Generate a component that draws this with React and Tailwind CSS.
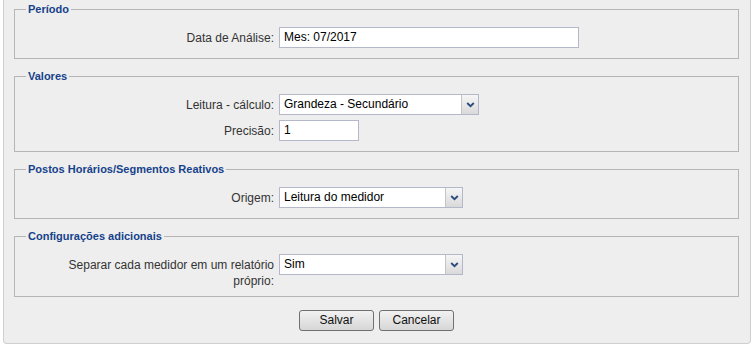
import React from "react";

const font = { fontFamily: '"Liberation Sans", Arial, sans-serif' };

function Chevron() {
  return (
    <svg width="9" height="6" viewBox="0 0 9 6">
      <path d="M1.2 1 L4.5 4.2 L7.8 1" fill="none" stroke="#2b4a7c" strokeWidth="1.8" />
    </svg>
  );
}

function Select({ value, width }) {
  return (
    <div className={`flex h-[21px] border border-[#b5b8c8] bg-white ${width}`}>
      <span className="flex-1 pl-[4px] text-[12px] leading-[19px] text-black">{value}</span>
      <div className="flex w-[17px] items-center justify-center border-l border-[#c4c4c4] bg-gradient-to-b from-[#f6f6f6] to-[#d9d9d9]">
        <Chevron />
      </div>
    </div>
  );
}

function Input({ value, width }) {
  return (
    <div className={`h-[21px] border border-[#b5b8c8] bg-white pl-[4px] text-[12px] leading-[19px] text-black ${width}`}>
      {value}
    </div>
  );
}

function Row({ label, children }) {
  return (
    <div className="flex items-start">
      <div className="w-[254px] pl-[40px] pr-[5px] pt-[3px] text-right text-[12px] leading-[16px] text-[#333]">
        {label}
      </div>
      {children}
    </div>
  );
}

function Fieldset({ legend, children, last }) {
  return (
    <fieldset
      className={`border border-[#b5b5b5] px-[10px] pt-[11px] ${last ? "mb-0 pb-[7px]" : "mb-[10px] pb-[10px]"}`}
    >
      <legend className="ml-[1px] px-[2px] text-[11px] font-bold leading-[14px] text-[#15428b]">{legend}</legend>
      <div className="flex flex-col gap-[5px]">{children}</div>
    </fieldset>
  );
}

function Button({ children }) {
  return (
    <button className="h-[21px] w-[75px] rounded-[3px] border border-[#707070] bg-gradient-to-b from-[#f2f2f2] to-[#d6d6d6] text-[12px] leading-[19px] text-[#111]">
      {children}
    </button>
  );
}

export default function App() {
  return (
    <div className="h-[348px] w-[756px] bg-white" style={font}>
      <div className="ml-[3px] h-[344px] w-[748px] rounded-b-[4px] border-x border-b border-[#cfcfcf] bg-[#eeeeee] pt-[2px] pl-[10px] pr-[11px]">
        <Fieldset legend="Período">
          <Row label="Data de Análise:">
            <Input value="Mes: 07/2017" width="w-[300px]" />
          </Row>
        </Fieldset>
        <Fieldset legend="Valores">
          <Row label="Leitura - cálculo:">
            <Select value="Grandeza - Secundário" width="w-[200px]" />
          </Row>
          <Row label="Precisão:">
            <Input value="1" width="w-[80px]" />
          </Row>
        </Fieldset>
        <Fieldset legend="Postos Horários/Segmentos Reativos">
          <Row label="Origem:">
            <Select value="Leitura do medidor" width="w-[184px]" />
          </Row>
        </Fieldset>
        <Fieldset legend="Configurações adicionais" last>
          <Row label="Separar cada medidor em um relatório próprio:">
            <Select value="Sim" width="w-[184px]" />
          </Row>
        </Fieldset>
        <div className="mt-[13px] flex justify-center gap-[5px]">
          <Button>Salvar</Button>
          <Button>Cancelar</Button>
        </div>
      </div>
    </div>
  );
}
